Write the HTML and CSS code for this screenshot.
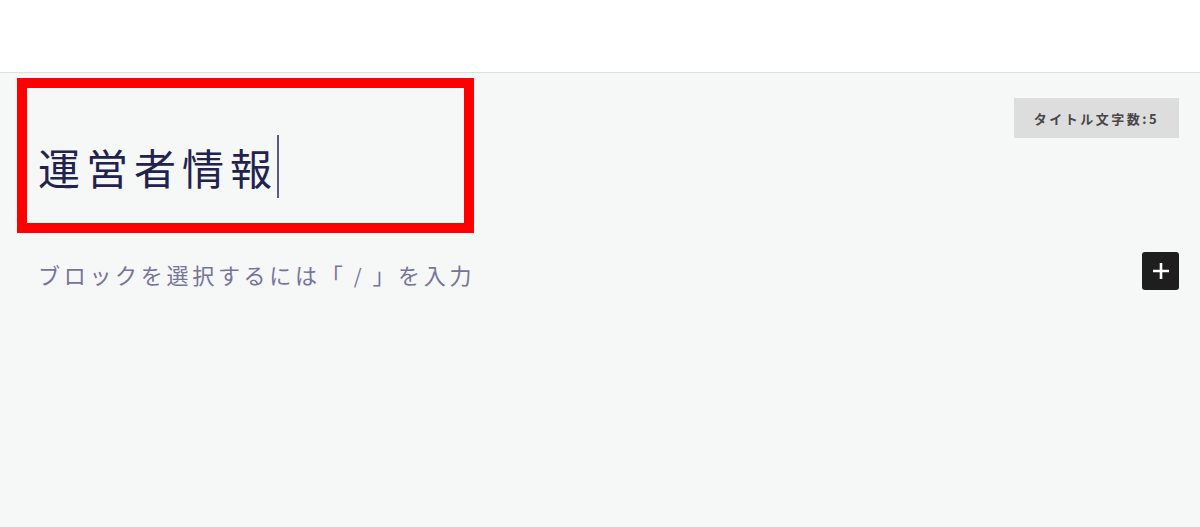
FILE: index.html
```html
<!DOCTYPE html>
<html>
<head>
    <title>運営者情報</title>
    <link rel="stylesheet" href="styles.css">
</head>
<body>
    <div class="header"></div>

    <div class="editor">
        <!-- Title -->
        <div class="title-row">
            <div class="title-box">
                <span class="title-text">運営者情報</span><span class="caret"></span>
            </div>
            <div class="badge">タイトル文字数:5</div>
        </div>

        <!-- Empty block -->
        <div class="block-row">
            <div class="placeholder">ブロックを選択するには「<span class="slash">/</span>」を入力</div>
            <button class="add-button" aria-label="ブロックを追加">
                <svg width="20" height="20" viewBox="0 0 20 20">
                    <path d="M10 2v16M2 10h16" stroke="#fff" stroke-width="2.6" fill="none"/>
                </svg>
            </button>
        </div>
    </div>
</body>
</html>
```

FILE: styles.css
```css
html, body {
    height: 100%;
}
body {
    margin: 0;
    background-color: #f6f7f7;
    font-family: "Noto Sans CJK JP", "Noto Sans", sans-serif;
}
.header {
    height: 72px;
    background-color: #fff;
    border-bottom: 1px solid #dedede;
}
.editor {
    padding: 5px 21px 0 17px;
}
.title-row {
    display: flex;
    justify-content: space-between;
    align-items: flex-start;
}
.title-box {
    width: 457px;
    height: 155px;
    box-sizing: border-box;
    border: 10px solid #ff0000;
    padding: 47px 0 0 11px;
    display: flex;
    align-items: flex-start;
}
.title-text {
    font-size: 42px;
    line-height: 63px;
    letter-spacing: 6px;
    color: #22224e;
}
.caret {
    display: inline-block;
    width: 2px;
    height: 63px;
    margin-left: -1px;
    background-color: #5c5c80;
}
.badge {
    margin-top: 20px;
    width: 165px;
    height: 40px;
    background-color: #dddddd;
    color: #474747;
    font-size: 13px;
    font-weight: bold;
    letter-spacing: 2.5px;
    display: flex;
    align-items: center;
    justify-content: center;
}
.block-row {
    margin-top: 19px;
    display: flex;
    justify-content: space-between;
    align-items: center;
}
.placeholder {
    padding: 6px 0 0 21px;
    font-size: 22px;
    letter-spacing: 3.7px;
    color: #77739a;
}
.slash {
    display: inline-block;
    width: 26px;
    text-align: center;
    font-size: 20px;
}
.add-button {
    width: 37px;
    height: 38px;
    padding: 0;
    border: none;
    border-radius: 3px;
    background-color: #1e1e1e;
    display: flex;
    align-items: center;
    justify-content: center;
    cursor: pointer;
}
```
